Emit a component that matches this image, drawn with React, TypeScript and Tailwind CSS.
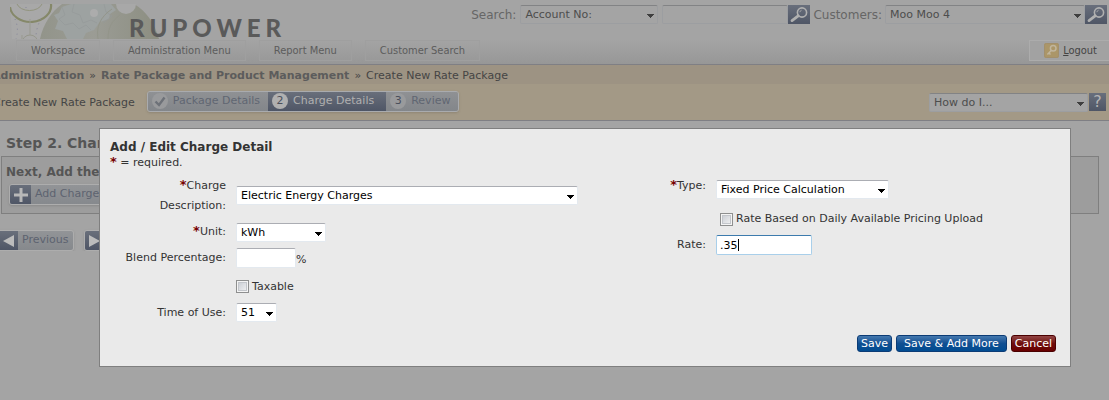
import type { ReactNode } from "react";

const verdana = "font-['DejaVu_Sans',sans-serif]";
const tahoma = "font-['DejaVu_Sans_Condensed','DejaVu_Sans',sans-serif]";

type SelectProps = {
  id: string;
  label?: string;
  options: string[];
  className: string;
  muted?: boolean;
};

function Select({ id, label, options, className, muted }: SelectProps) {
  const look = muted
    ? "border-[#9c9ea1] border-t-[#828385] bg-[#a4a4a4] text-[#4d4d4d]"
    : "border-[#e3e9ef] border-t-[#abadb3] bg-white text-black";
  return (
    <span className={`relative flex h-[19px] ${className}`}>
      <select
        id={id}
        aria-label={label}
        className={`w-full appearance-none rounded-[2px] border pt-px pl-1 text-[11px] leading-4 outline-none ${look}`}
      >
        {options.map((option) => (
          <option key={option}>{option}</option>
        ))}
      </select>
      <svg
        viewBox="0 0 7 4"
        className={`pointer-events-none absolute top-[9px] right-1 h-1 w-[7px] ${muted ? "fill-[#3f3f3f]" : "fill-black"}`}
        shapeRendering="crispEdges"
      >
        <path d="M0 0h7v1h-1v1h-1v1h-1v1h-1v-1h-1v-1h-1v-1h-1z" />
      </svg>
    </span>
  );
}

function SearchButton({ label }: { label: string }) {
  return (
    <button
      type="button"
      aria-label={label}
      className="flex h-[19px] w-[22px] items-center justify-center bg-linear-to-b from-[#696f7c] to-[#4f5666]"
    >
      <svg viewBox="0 0 22 19" className="h-[19px] w-[22px]" fill="none" stroke="#b0b0b0">
        <circle cx="14" cy="7.5" r="4.6" strokeWidth="1.6" />
        <path d="M10.2 10.8 4 15.6" strokeWidth="2.8" strokeLinecap="round" />
        <path d="M11.8 7.2a2.4 2.4 0 0 1 1.8-2" strokeWidth="0.8" />
      </svg>
    </button>
  );
}

function Globe() {
  return (
    <svg viewBox="0 0 150 35" className="h-[35px] w-[150px]" aria-hidden="true">
      <defs>
        <linearGradient id="globe-fill" x1="0" x2="1">
          <stop offset="0" stopColor="#92948a" />
          <stop offset="0.45" stopColor="#9b9c95" />
          <stop offset="1" stopColor="#8c8e81" />
        </linearGradient>
      </defs>
      <path d="M0 0h120v14l18 5v16H2z" fill="#a8a8a8" />
      <path d="M30 35C33 20 42 7 52 0h72c12 7 20 18 25 35z" fill="url(#globe-fill)" />
      <path
        d="M52 3l9-3h40l5 6-6 4-1 5-9 3-6 8-8 3-3 6H57l-4-8-8-2 3-8-4-6 5-2z"
        fill="#9da2a1"
      />
      <path
        d="M52 3l3 8-6 4 6 6 8-2 6 6 7-4 5 5M64 0l-2 8 8 3 3 8 8-3 6 3M94 0l2 8 6 4-9 7"
        fill="none"
        stroke="#959a99"
        strokeWidth="0.7"
      />
      <path d="M88 35c-2-12 2-22 14-30M98 35c0-12 4-18 12-24" fill="none" stroke="#93958a" />
      <circle cx="84" cy="9" r="4" fill="#acacac" />
      <circle cx="116" cy="0" r="10" fill="#a8a8a8" />
      <path d="M0 3a20 16 0 0 0 41-3" fill="none" stroke="#858869" strokeWidth="2.2" />
      <path d="M7 0a13 9 0 0 0 25 0" fill="none" stroke="#92947e" />
      <circle cx="20" cy="39" r="8" fill="none" stroke="#96978b" />
      <circle cx="20" cy="39" r="5" fill="#aaaaaa" />
      <path d="M20 15v16M12 31v4" stroke="#98998f" />
      <path
        d="M5 15c3 7 3 13 1 20M31 15c-3 5-5 12-5 18M16 3l0 3"
        fill="none"
        stroke="#85859a"
        strokeDasharray="1 4"
      />
    </svg>
  );
}

const navItems = ["Workspace", "Administration Menu", "Report Menu", "Customer Search"];

function Header() {
  return (
    <header className="border-b border-[#7f7f84] bg-[#a4a4a4]">
      <div className="flex h-10 items-start pr-0.5 pl-2.5">
        <div className="relative flex w-[300px] pt-1">
          <Globe />
          <span className="absolute top-3 left-[119px] font-[Lato,sans-serif] text-2xl leading-8 font-black tracking-[5px] text-[#5a5a5a]">
            RUPOWER
          </span>
        </div>
        <div className="ml-auto flex items-center pt-[5px] text-xs text-[#666]">
          <label htmlFor="search-by" className="mr-1">
            Search:
          </label>
          <Select
            id="search-by"
            options={["Account No:", "Customer Name:"]}
            className="w-[138px]"
            muted
          />
          <input
            type="text"
            aria-label="Search text"
            className="ml-1 h-[19px] w-[126px] rounded-[2px] border border-[#9c9ea1] border-t-[#828385] bg-[#a4a4a4] px-1 outline-none"
          />
          <SearchButton label="Search" />
          <label htmlFor="customers" className="mx-[3px]">
            Customers:
          </label>
          <Select id="customers" options={["Moo Moo 4"]} className="w-[200px]" muted />
          <SearchButton label="Find customer" />
        </div>
      </div>
      <nav
        className={`flex items-start gap-[13px] bg-linear-to-b from-[#a4a4a4] to-[#979797] pb-[3px] pl-4 text-[11px] text-[#5c5c5c] ${tahoma}`}
      >
        {navItems.map((item) => (
          <a
            key={item}
            href="#"
            className="flex h-[21px] items-center border border-[#9f9f9f] px-3.5 pt-0.5"
          >
            {item}
          </a>
        ))}
        <a
          href="#"
          className="ml-auto flex h-[21px] items-center gap-1 border border-r-0 border-[#acacac] bg-[#a2a2a2] pr-3 pl-3.5 text-[#444]"
        >
          <svg viewBox="0 0 15 15" className="size-[15px]" aria-hidden="true">
            <rect width="15" height="15" rx="2" fill="#ab9668" />
            <rect x="0.5" y="0.5" width="14" height="14" rx="2" fill="none" stroke="#a28f6c" />
            <circle cx="9.2" cy="5.2" r="2.8" fill="none" stroke="#c0b59d" strokeWidth="1.5" />
            <path d="M7.2 7.4 3.4 11.6M5 10l1.5 1.5" stroke="#c0b59d" strokeWidth="1.5" />
          </svg>
          <span className="pt-0.5">
            <u>L</u>ogout
          </span>
        </a>
      </nav>
    </header>
  );
}

type StepProps = { badge: ReactNode; active?: boolean; children: ReactNode };

function Step({ badge, active, children }: StepProps) {
  return (
    <li
      className={`flex items-center gap-[5px] pl-1 ${
        active
          ? "bg-linear-to-b from-[#696f7b] to-[#4f5666] pr-3 text-[#b0b0b0]"
          : "bg-linear-to-b from-[#8f9194] to-[#83868a] pr-2 text-[#606672]"
      }`}
    >
      <span
        className={`flex size-4 items-center justify-center rounded-full text-[11px] leading-4 text-[#4a4f5b] ${
          active ? "bg-[#b0b0b0]" : "bg-[#999a9c]"
        }`}
      >
        {badge}
      </span>
      {children}
    </li>
  );
}

function Toolbar() {
  return (
    <div className="border-b border-[#7f7f84] bg-[#a39986] text-[#454545]">
      <div className="h-[19px] overflow-hidden bg-[#9d9383] text-[11px] leading-[21px] whitespace-nowrap">
        <div className="-ml-2 flex gap-[5px]">
          <b className="text-[#5c5c5c]">Administration</b>
          <span>»</span>
          <b className="text-[#5c5c5c]">Rate Package and Product Management</b>
          <span>»</span>
          <span>Create New Rate Package</span>
        </div>
      </div>
      <div className="flex h-9 items-center overflow-hidden">
        <span className="-ml-[7px] pt-0.5 text-[11px] whitespace-nowrap">
          Create New Rate Package
        </span>
        <ol className="mb-0.5 ml-3 flex h-[21px] overflow-hidden rounded-[3px] border border-[#a9abae] text-[11px] whitespace-nowrap shadow-sm">
          <Step
            badge={
              <svg viewBox="0 0 16 16" className="size-4" aria-hidden="true">
                <path d="M3.5 8.5 7 12l5.5-7.5" fill="none" stroke="#6d7178" strokeWidth="2.4" />
              </svg>
            }
          >
            Package Details
          </Step>
          <Step badge="2" active>
            Charge Details
          </Step>
          <Step badge="3">Review</Step>
        </ol>
        <div className="ml-auto flex items-center gap-px pr-[3px]">
          <Select
            id="help"
            label="Help topic"
            options={["How do I..."]}
            className="w-[159px]"
            muted
          />
          <button
            type="button"
            aria-label="Help"
            className="flex h-[18px] w-[17px] items-center justify-center bg-linear-to-b from-[#696f7c] to-[#4f5666] text-base leading-4 text-[#b4b4b4]"
          >
            ?
          </button>
        </div>
      </div>
    </div>
  );
}

type DimButtonProps = { icon: ReactNode; label?: string; children?: ReactNode };

function DimButton({ icon, label, children }: DimButtonProps) {
  return (
    <button
      type="button"
      aria-label={label}
      className="flex h-[21px] items-stretch overflow-hidden rounded-[3px] border border-[#adadad] bg-linear-to-b from-[#929497] to-[#86898d] text-[11px] whitespace-nowrap text-[#5d6370] shadow-sm"
    >
      <span className="flex w-[21px] items-center justify-center bg-linear-to-b from-[#696f7b] to-[#4f5666]">
        {icon}
      </span>
      {children && <span className="self-center px-1">{children}</span>}
    </button>
  );
}

function Page() {
  return (
    <main className="overflow-hidden pt-3 text-[#555]">
      <h1 className="pl-1.5 text-sm leading-5 font-bold">Step 2. Char</h1>
      <section className="mt-[3px] mr-2.5 ml-px border border-[#7f7f7f] bg-[#9d9d9d] pt-1.5 pb-2 pl-1">
        <h2 className="text-xs leading-[18px] font-bold">Next, Add the</h2>
        <div className="mt-[3px] flex pl-[3px]">
          <DimButton
            icon={
              <svg viewBox="0 0 14 14" className="size-3.5" aria-hidden="true">
                <path d="M7 0v14M0 7h14" stroke="#b8b8b8" strokeWidth="3" />
              </svg>
            }
          >
            Add Charge
          </DimButton>
        </div>
      </section>
      <div className="mt-4 -ml-1 flex gap-2.5">
        <DimButton
          icon={
            <svg viewBox="0 0 12 12" className="size-3" aria-hidden="true">
              <path d="M12 0v12L1 6z" fill="#bcbcbc" />
            </svg>
          }
        >
          Previous
        </DimButton>
        <DimButton
          label="Next"
          icon={
            <svg viewBox="0 0 12 12" className="size-3" aria-hidden="true">
              <path d="M0 0v12l11-6z" fill="#bcbcbc" />
            </svg>
          }
        />
      </div>
    </main>
  );
}

const labelClass = "w-[116px] shrink-0 text-right leading-5";
const inputClass = "rounded-[2px] border bg-white px-[3px] text-[11px] text-black outline-none";
const checkboxClass =
  "size-[13px] shrink-0 appearance-none border border-[#8e8f8f] bg-linear-to-br from-[#c4c8cf] to-[#f6f6f6] shadow-[inset_0_0_0_1px_#f4f4f4,inset_0_0_0_2px_#c3c6cb]";

function Required() {
  return <span className="text-[13px] leading-none font-bold text-[#700]">*</span>;
}

type ActionButtonProps = { tone: "blue" | "red"; wide?: boolean; children: ReactNode };

function ActionButton({ tone, wide, children }: ActionButtonProps) {
  return (
    <button
      type={tone === "blue" ? "submit" : "button"}
      className={`h-[17px] rounded-[3px] border text-[11px] leading-[15px] text-white ${
        wide ? "px-[7px]" : "px-[3px]"
      } ${
        tone === "blue"
          ? "border-[#0b3b75] bg-linear-to-b from-[#4478ae] via-[#0f4f92] to-[#004b91]"
          : "border-[#4a0000] bg-linear-to-b from-[#924545] via-[#700c0c] to-[#680000]"
      }`}
    >
      {children}
    </button>
  );
}

function ChargeDialog() {
  return (
    <div
      role="dialog"
      aria-labelledby="dialog-title"
      className="absolute top-32 right-[38px] left-[99px] border border-[#7f7f7f] bg-[#eaeaea] pt-2.5 pb-3.5 pl-2.5 text-[11px] text-[#333]"
    >
      <h2 id="dialog-title" className="text-xs leading-4 font-bold">
        Add / Edit Charge Detail
      </h2>
      <p className="h-[13px] leading-[13px]">
        <Required /> = required.
      </p>
      <form onSubmit={(event) => event.preventDefault()}>
        <div className="grid grid-cols-2 pt-2">
          <div className="flex flex-col">
            <div className="flex items-start gap-2.5">
              <label htmlFor="description" className={labelClass}>
                <Required />
                Charge Description:
              </label>
              <Select
                id="description"
                options={["Electric Energy Charges"]}
                className="mt-2.5 w-[342px]"
              />
            </div>
            <div className="mt-1.5 flex items-center gap-2.5">
              <label htmlFor="unit" className={labelClass}>
                <Required />
                Unit:
              </label>
              <Select id="unit" options={["kWh", "kW"]} className="w-[90px]" />
            </div>
            <div className="mt-1.5 flex items-center gap-2.5">
              <label htmlFor="blend" className={labelClass}>
                Blend Percentage:
              </label>
              <span className="flex items-center">
                <input
                  id="blend"
                  type="text"
                  className={`h-5 w-[60px] border-[#e3e9ef] border-t-[#abadb3] ${inputClass}`}
                />
                <span className="pt-1">%</span>
              </span>
            </div>
            <label className="mt-2 ml-[126px] flex items-center gap-[3px] leading-5">
              <input type="checkbox" className={checkboxClass} />
              Taxable
            </label>
            <div className="mt-1.5 flex items-center gap-2.5">
              <label htmlFor="time-of-use" className={labelClass}>
                Time of Use:
              </label>
              <Select id="time-of-use" options={["51"]} className="w-[41px]" />
            </div>
          </div>
          <div className="flex flex-col">
            <div className="flex items-start gap-2.5">
              <label htmlFor="type" className={labelClass}>
                <Required />
                Type:
              </label>
              <Select id="type" options={["Fixed Price Calculation"]} className="mt-1 w-[173px]" />
            </div>
            <label className="mt-2.5 ml-[130px] flex items-center gap-[3px] leading-5">
              <input type="checkbox" className={checkboxClass} />
              Rate Based on Daily Available Pricing Upload
            </label>
            <div className="mt-1.5 flex items-center gap-2.5">
              <label htmlFor="rate" className={labelClass}>
                Rate:
              </label>
              <span className="relative flex">
                <input
                  id="rate"
                  type="text"
                  defaultValue=".35"
                  className={`h-5 w-24 border-[#a9cfea] border-t-[#3d7bad] caret-transparent ${inputClass}`}
                />
                <span className="absolute top-1 left-[22px] h-3 w-px bg-black" />
              </span>
            </div>
          </div>
        </div>
        <div className="mt-3 flex justify-end gap-1 pr-3.5">
          <ActionButton tone="blue">Save</ActionButton>
          <ActionButton tone="blue" wide>
            Save &amp; Add More
          </ActionButton>
          <ActionButton tone="red">Cancel</ActionButton>
        </div>
      </form>
    </div>
  );
}

export default function App() {
  return (
    <div className={`relative min-h-screen overflow-hidden bg-[#a4a4a4] ${verdana}`}>
      <Header />
      <Toolbar />
      <Page />
      <ChargeDialog />
    </div>
  );
}
